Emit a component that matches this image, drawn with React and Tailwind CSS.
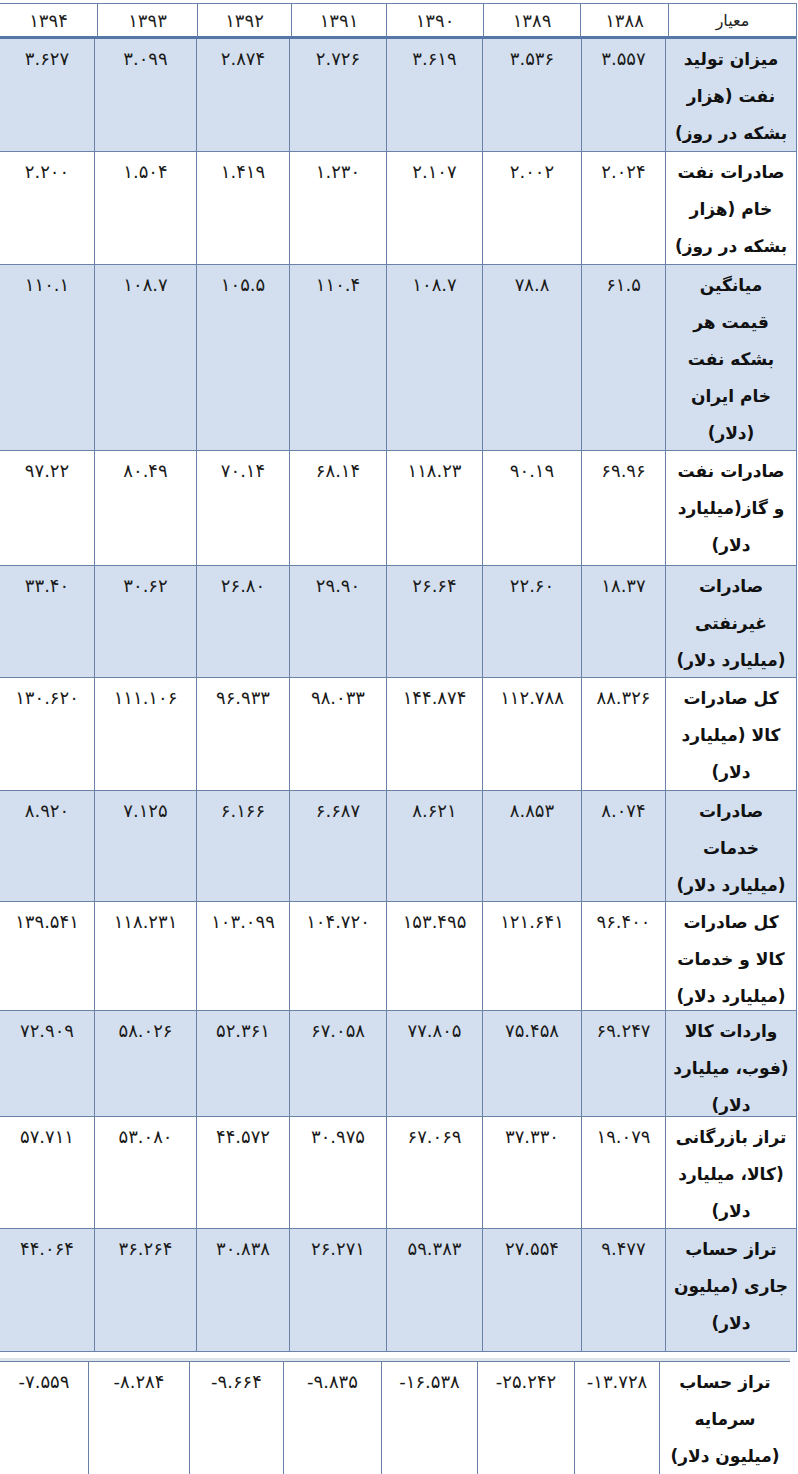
import React from 'react';

const FONT = '"DejaVu Sans", "Noto Sans", sans-serif';

const years = ['۱۳۹۴', '۱۳۹۳', '۱۳۹۲', '۱۳۹۱', '۱۳۹۰', '۱۳۸۹', '۱۳۸۸'];

const rows = [
  { h: 'h-[113px]', shade: true, label: ['میزان تولید', 'نفت (هزار', 'بشکه در روز)'], vals: ['۳.۶۲۷', '۳.۰۹۹', '۲.۸۷۴', '۲.۷۲۶', '۳.۶۱۹', '۳.۵۳۶', '۳.۵۵۷'] },
  { h: 'h-[113px]', label: ['صادرات نفت', 'خام (هزار', 'بشکه در روز)'], vals: ['۲.۲۰۰', '۱.۵۰۴', '۱.۴۱۹', '۱.۲۳۰', '۲.۱۰۷', '۲.۰۰۲', '۲.۰۲۴'] },
  { h: 'h-[186px]', shade: true, label: ['میانگین', 'قیمت هر', 'بشکه نفت', 'خام ایران', '(دلار)'], vals: ['۱۱۰.۱', '۱۰۸.۷', '۱۰۵.۵', '۱۱۰.۴', '۱۰۸.۷', '۷۸.۸', '۶۱.۵'] },
  { h: 'h-[115px]', label: ['صادرات نفت', 'و گاز(میلیارد', 'دلار)'], vals: ['۹۷.۲۲', '۸۰.۴۹', '۷۰.۱۴', '۶۸.۱۴', '۱۱۸.۲۳', '۹۰.۱۹', '۶۹.۹۶'] },
  { h: 'h-[112px]', shade: true, label: ['صادرات', 'غیرنفتی', '(میلیارد دلار)'], vals: ['۳۳.۴۰', '۳۰.۶۲', '۲۶.۸۰', '۲۹.۹۰', '۲۶.۶۴', '۲۲.۶۰', '۱۸.۳۷'] },
  { h: 'h-[113px]', label: ['کل صادرات', 'کالا (میلیارد', 'دلار)'], vals: ['۱۳۰.۶۲۰', '۱۱۱.۱۰۶', '۹۶.۹۳۳', '۹۸.۰۳۳', '۱۴۴.۸۷۴', '۱۱۲.۷۸۸', '۸۸.۳۲۶'] },
  { h: 'h-[111px]', shade: true, label: ['صادرات', 'خدمات', '(میلیارد دلار)'], vals: ['۸.۹۲۰', '۷.۱۲۵', '۶.۱۶۶', '۶.۶۸۷', '۸.۶۲۱', '۸.۸۵۳', '۸.۰۷۴'] },
  { h: 'h-[109px]', label: ['کل صادرات', 'کالا و خدمات', '(میلیارد دلار)'], vals: ['۱۳۹.۵۴۱', '۱۱۸.۲۳۱', '۱۰۳.۰۹۹', '۱۰۴.۷۲۰', '۱۵۳.۴۹۵', '۱۲۱.۶۴۱', '۹۶.۴۰۰'] },
  { h: 'h-[106px]', shade: true, label: ['واردات کالا', '(فوب، میلیارد', 'دلار)'], vals: ['۷۲.۹۰۹', '۵۸.۰۲۶', '۵۲.۳۶۱', '۶۷.۰۵۸', '۷۷.۸۰۵', '۷۵.۴۵۸', '۶۹.۲۴۷'] },
  { h: 'h-[112px]', label: ['تراز بازرگانی', '(کالا، میلیارد', 'دلار)'], vals: ['۵۷.۷۱۱', '۵۳.۰۸۰', '۴۴.۵۷۲', '۳۰.۹۷۵', '۶۷.۰۶۹', '۳۷.۳۳۰', '۱۹.۰۷۹'] },
  { h: 'h-[123px]', shade: true, label: ['تراز حساب', 'جاری (میلیون', 'دلار)'], vals: ['۴۴.۰۶۴', '۳۶.۲۶۴', '۳۰.۸۳۸', '۲۶.۲۷۱', '۵۹.۳۸۳', '۲۷.۵۵۴', '۹.۴۷۷'] },
];

const last = { label: ['تراز حساب', 'سرمایه', '(میلیون دلار)'], vals: ['-۷.۵۵۹', '-۸.۲۸۴', '-۹.۶۶۴', '-۹.۸۳۵', '-۱۶.۵۳۸', '-۲۵.۲۴۲', '-۱۳.۷۲۸'] };

function Label({ lines }) {
  return (
    <div dir="rtl" className="text-center font-bold text-[17px] leading-[37px] text-[#111] pt-[2px]">
      {lines.map((l, i) => <div key={i} className="whitespace-nowrap">{l}</div>)}
    </div>
  );
}

function Num({ v }) {
  return <div dir="ltr" className="text-center text-[18px] leading-[37px] text-[#1a1a1a] pt-[1px] whitespace-nowrap">{v}</div>;
}

export default function App() {
  return (
    <div className="w-[798px] h-[1474px] bg-white overflow-hidden pt-[3px]" style={{ fontFamily: FONT }}>
      <div className="w-[797px] border-r border-[#6a82a8]">
        {/* header */}
        <div className="grid grid-cols-[98px_100px_94px_95px_97px_97px_88px_127px] h-[36px] border-t border-[#6a82a8] border-b-[3px] border-b-[#5577a6]">
          {years.map((y) => (
            <div key={y} className="border-r border-[#6a82a8] flex justify-center">
              <span dir="ltr" className="text-[18px] leading-[33px] text-[#222]">{y}</span>
            </div>
          ))}
          <div dir="rtl" className="flex justify-center">
            <span className="text-[16px] leading-[33px] text-[#222]">معیار</span>
          </div>
        </div>

        {rows.map((r, i) => (
          <div key={i} className={`grid grid-cols-[95px_102px_93px_97px_96px_99px_84px_130px] border-b border-[#6a82a8] ${r.h} ${r.shade ? 'bg-[#d3dfee]' : 'bg-white'}`}>
            {r.vals.map((v, j) => (
              <div key={j} className="border-r border-[#6a82a8]"><Num v={v} /></div>
            ))}
            <Label lines={r.label} />
          </div>
        ))}
      </div>

      {/* bottom table, slightly offset in the scan */}
      <div className="mt-[6px] w-[790px] border-t-[3px] border-t-[#dfe3ea]">
        <div className="grid grid-cols-[89px_101px_94px_98px_96px_97px_85px_130px] h-[120px] border-t border-[#6a82a8]">
          {last.vals.map((v, j) => (
            <div key={j} className="border-r border-[#6a82a8]"><Num v={v} /></div>
          ))}
          <Label lines={last.label} />
        </div>
      </div>
    </div>
  );
}
